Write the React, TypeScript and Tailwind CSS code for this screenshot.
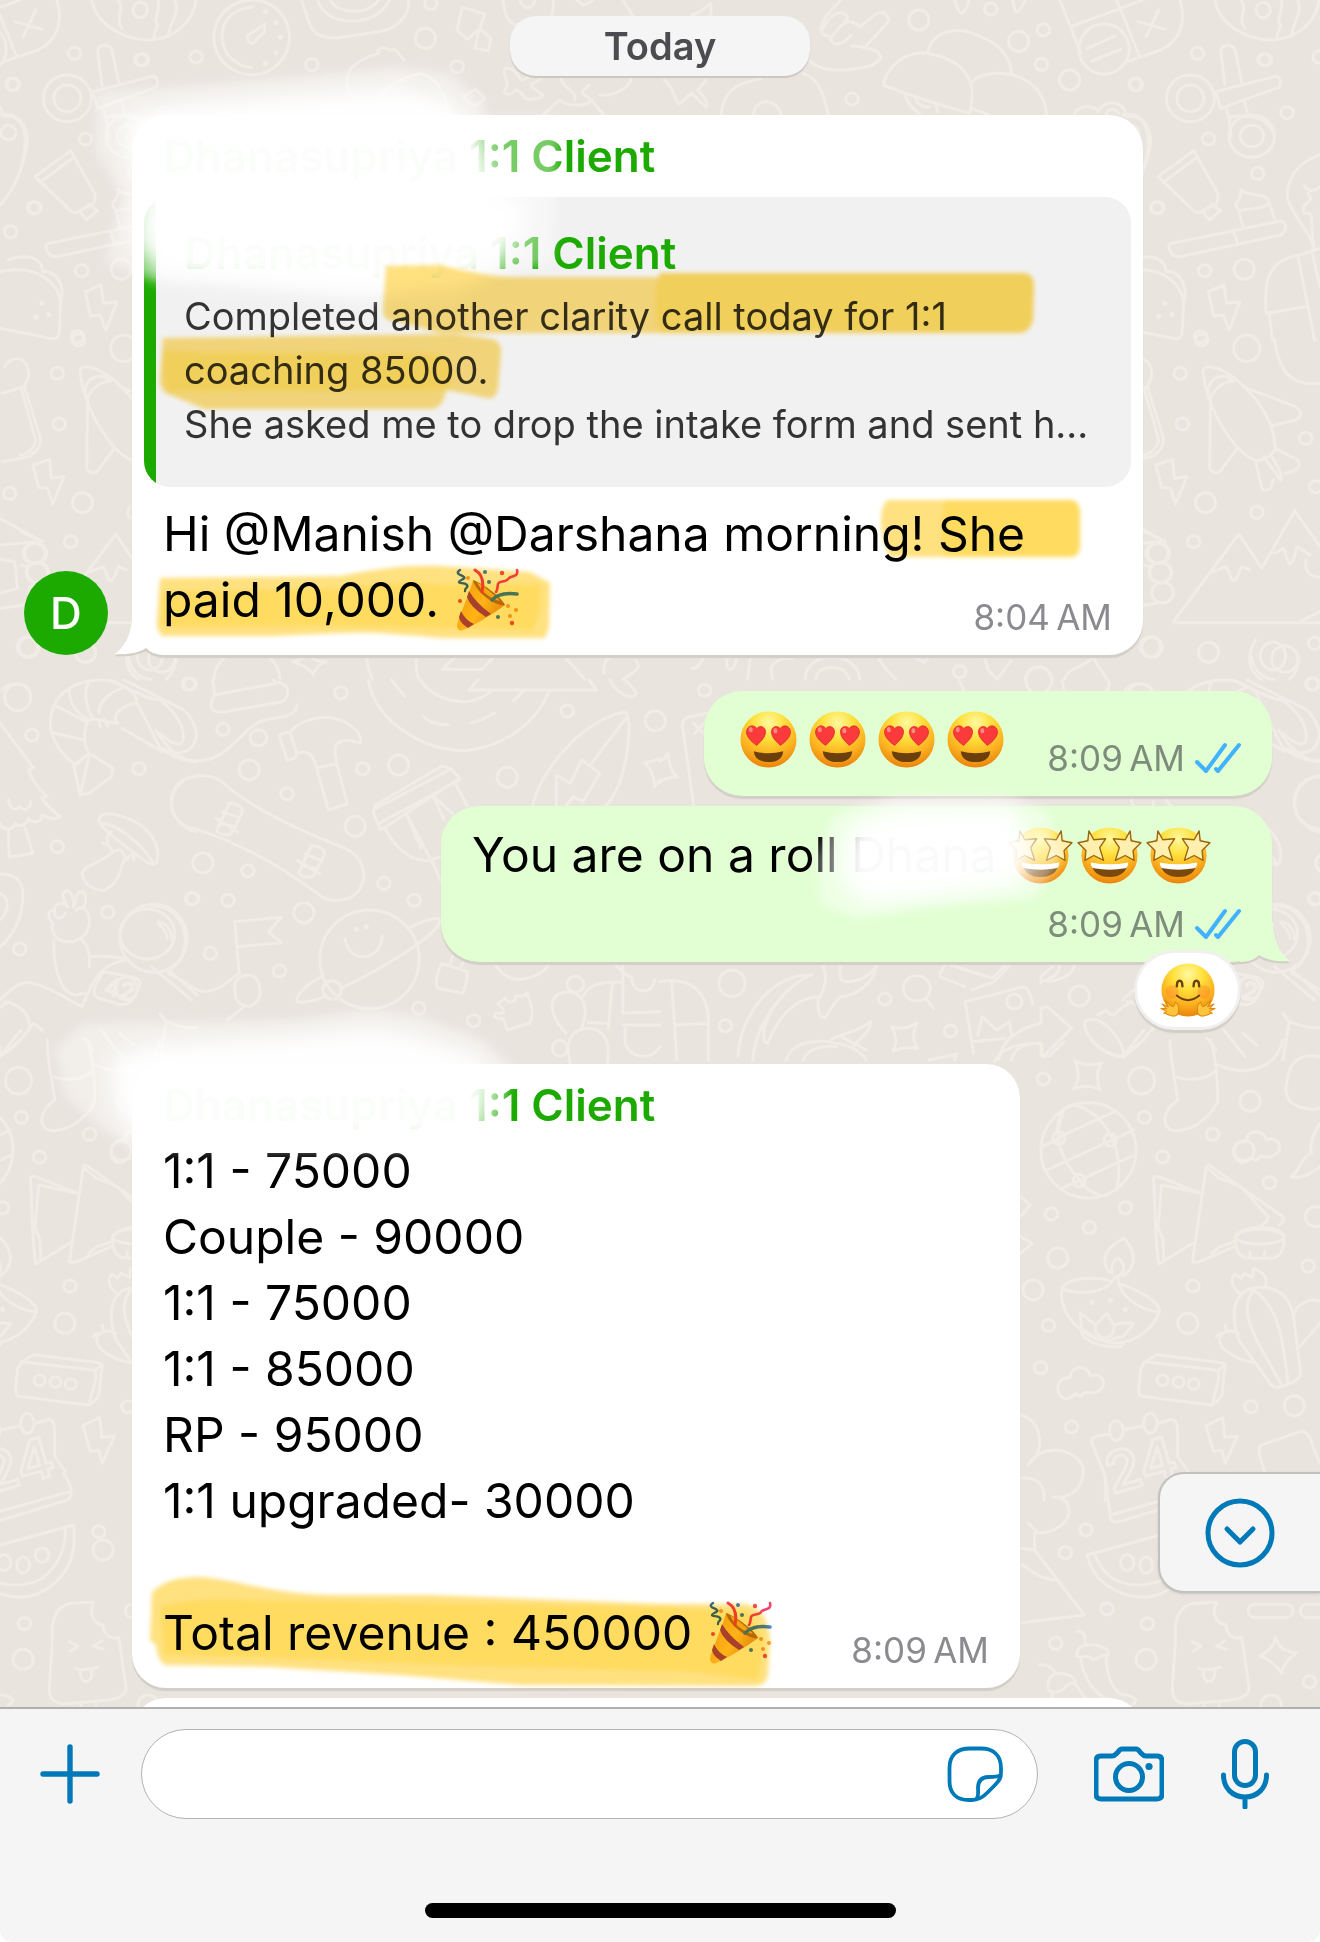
import type { ReactNode } from "react";

const INK = "#f0ece6";

type Patch = {
  at: [number, number];
  d: string;
  small: number[][];
  big?: number[][];
  huge?: number[][];
  dots?: number[][];
  rings?: number[][];
};

// every patch of the wallpaper has its own drawing grid
const patches: Patch[] = [
  {
    at: [0, 0],
    d: `M218 0C230 80 300 120 355 120C420 115 460 60 466 0M280 0C300 30 270 50 290 85M375 0C385 30 360 60 375 75C370 95 365 105 365 118M415 0C430 40 400 70 400 110
    M600 22C545 25 525 75 528 115C530 160 560 200 598 203M630 72L628 95L600 130C590 130 585 115 590 105Z
    M716 0L735 70C745 110 780 120 820 110L900 95C950 85 975 40 970 0M755 0C770 80 890 90 925 0M785 0C800 40 870 50 900 0
    M1098 22L1152 42L1140 85L1110 118L1086 90ZM1140 85L1166 115L1160 153L1128 145L1138 90
    M830 280C810 220 840 180 900 160C890 150 910 135 925 150C950 145 945 165 960 180M905 320C900 250 970 230 1000 220C1050 240 1060 300 1065 340M1100 290L1130 268L1152 295L1128 320Z
    M1200 205C1225 200 1235 240 1240 240C1260 235 1270 205 1290 215C1300 240 1250 250 1265 262L1290 285C1285 300 1265 295 1262 298C1245 305 1245 275 1225 270C1210 290 1195 285 1200 270C1215 240 1190 225 1200 205
    M1290 345L1330 300C1345 320 1400 320 1405 300L1435 345M1335 230C1325 260 1375 270 1365 300M1400 295C1395 280 1365 290 1400 255M1425 285C1460 290 1500 260 1500 230
    M1195 0C1200 60 1215 75 1230 75M1315 0C1315 40 1310 60 1300 80M1235 0C1240 30 1270 30 1270 0M1370 0L1385 15L1400 8L1408 0M1480 0L1505 50
    M0 345C50 330 75 400 62 450C50 530 20 590 0 615`,
    small: [[1024, 10], [1086, 200], [741, 194], [466, 171], [338, 179], [32, 253], [83, 623], [25, 695]],
    big: [[1011, 115]],
    dots: [[631, 34], [656, 68], [666, 112], [656, 158], [631, 190]],
    rings: [[333, 30, 17, 23], [598, 112, 90, 112], [20, 398, 18, 22]],
  },
  {
    at: [660, 0],
    d: `M950 0L1000 160M980 78L1148 0M1085 0L1138 165M1110 185L1190 150C1240 120 1250 60 1235 0M1135 65L1200 88M1185 30L1155 110M1015 145L1082 108M1025 183L1095 148
    M1320 275L1465 228C1478 235 1475 255 1470 262L1332 325ZM1342 255L1332 150C1340 130 1362 135 1366 150L1382 245M1345 325L1352 355L1357 410M1350 352C1380 345 1440 340 1458 400M1388 302L1397 345
    M1268 452L1325 580C1328 605 1320 620 1310 618L1282 638C1270 640 1262 625 1258 620L1183 530ZM1195 548L1272 475M1310 612L1332 632L1305 660L1290 635
    M1210 745C1205 730 1215 730 1225 728L1475 663C1490 665 1490 690 1475 705L1235 770C1220 770 1212 760 1210 745M1363 695L1372 730M1385 682L1375 630C1355 600 1385 610 1380 568C1395 595 1440 570 1448 610C1435 630 1390 625 1375 632M1448 612L1462 662
    M1100 815C1200 790 1245 860 1244 920L1240 1005C1235 1020 1225 1018 1200 1010L1100 985M1120 780C1180 755 1200 785 1202 815C1230 810 1255 850 1245 905
    M1303 875L1340 855L1346 910L1378 905L1352 990L1338 945L1315 948Z
    M1568 465C1510 490 1490 540 1490 590C1500 650 1550 700 1555 750M1530 555C1545 590 1568 560 1568 560M1555 750C1540 640 1560 640 1530 640C1520 600 1560 610 1540 580
    M1440 940C1435 850 1440 780 1520 765L1568 745M1440 940L1535 920M1515 765L1555 1020M1447 940L1455 1020M1548 750L1568 860
    M430 0C400 40 385 55 382 90C385 115 405 105 405 110C405 140 430 140 455 105M385 90C400 50 430 20 445 50C450 60 410 100 405 115M440 70C450 60 465 70 475 80L515 40C540 30 550 60 535 75L485 145M455 138C490 140 525 150 525 175L505 195C450 215 380 220 355 180
    M635 160C650 80 720 80 760 110C810 130 835 180 835 220M530 255C545 180 600 145 655 165C730 190 755 250 735 340C650 310 580 280 530 255M738 250C760 215 830 205 880 250C910 280 918 320 918 345M580 280C590 320 610 335 618 345M605 290C610 320 640 325 640 320M655 310L660 335M740 325L782 345
    M145 345C150 290 165 260 210 245L240 235M340 220C380 235 390 290 400 345M222 345C225 290 280 295 288 345
    M985 340C1000 310 1040 320 1040 335C1060 290 1110 310 1105 345M1060 340C1065 325 1085 325 1090 340M1110 350C1160 340 1170 420 1150 500
    M700 0C710 50 720 55 735 0M838 0C845 40 845 55 868 0M10 240C40 270 30 300 45 312C55 310 60 290 75 280L110 322C115 310 105 290 90 270L110 240M75 45C100 40 110 15 120 10C125 40 120 60 105 75`,
    small: [[786, 27], [911, 90], [906, 193], [1129, 253], [456, 297], [1277, 160], [1435, 179], [1490, 338], [1303, 417], [1180, 623], [1420, 520], [1294, 812], [1284, 1010]],
    big: [[615, 60], [852, 124], [973, 240], [1388, 808]],
    dots: [[1200, 910], [1185, 950], [1216, 943]],
    rings: [[1055, 147, 60, 75], [1260, 295, 57, 70], [1260, 295, 32, 40], [1406, 408, 54, 64], [1406, 408, 28, 33]],
  },
  {
    at: [0, 340],
    d: `M0 535L100 605M0 615L85 605M0 658L35 665L42 745L0 760M0 805L60 795
    M508 1018C515 900 660 900 665 1018M695 965C720 960 730 950 735 935C740 960 750 965 775 965C750 975 745 1000 745 1005C735 985 720 975 695 965M872 950C870 980 880 1000 885 1018M990 948C985 980 990 1000 995 1018M1085 948L1050 988L1145 988L1175 948M1340 948L1390 1018M1435 1000C1430 960 1450 950 1460 948M1510 960C1530 985 1500 1000 1480 1018M305 948C310 1000 340 1018 360 1018M418 948C420 980 410 1000 395 1018`,
    small: [[23, 460], [187, 0]],
    big: [[69, 922]],
    rings: [[85, 640, 26, 31], [90, 698, 26, 31], [356, 948, 30, 42]],
  },
  {
    at: [660, 340],
    d: `M1290 95C1290 70 1330 75 1380 130C1440 200 1460 270 1462 325C1455 345 1435 365 1415 362C1370 340 1300 220 1290 95M1308 175C1320 130 1360 120 1362 125C1355 105 1310 95 1302 150C1303 165 1306 175 1308 175M1385 140L1510 200C1530 220 1520 235 1510 240L1452 258M1308 180L1306 385C1310 400 1325 400 1330 395L1372 325M1415 365L1430 445C1435 455 1445 450 1450 445L1458 418M1435 350L1475 422M1450 345C1470 380 1480 410 1475 422M1462 325L1515 360C1525 380 1515 392 1485 400
    M1178 375L1218 358L1222 415L1252 410L1225 492L1213 445L1192 442Z
    M1220 845L1375 582L1430 685L1508 512L1568 620M1220 848L1568 848M1315 695L1345 680C1355 700 1355 720 1362 722C1375 720 1375 690 1382 680L1400 690M1460 640L1482 625C1490 650 1490 670 1497 672C1510 660 1508 630 1515 620L1545 645M1535 660C1530 690 1540 710 1568 712M1520 845L1568 815
    M1415 900C1390 950 1400 1000 1430 1018M1110 80C1130 40 1170 50 1168 110L1158 140L1195 290C1200 330 1175 350 1150 355L1105 365M1105 160L1158 140M1150 145L1185 300C1180 330 1160 345 1148 345M1150 575L1200 605M1150 675L1165 680M1148 795L1180 790M1460 0C1470 80 1490 140 1568 130
    M160 948C150 1010 185 990 180 950M215 948L208 1018M75 985C90 990 100 960 105 948M345 1018C345 930 470 930 475 1018M370 1018C375 970 440 970 450 1018M515 948L535 985L560 1018M600 948L628 968L640 948M770 948L780 990L800 1018L835 962M868 1018C870 970 925 970 930 1018M960 1018C970 980 1000 990 1030 950C1040 990 1060 1000 1060 1018M268 1018C255 970 275 955 315 955`,
    small: [[1236, 100], [1241, 252], [1534, 295], [1418, 517], [1268, 605], [1555, 910], [712, 995], [1558, 440]],
    big: [[1296, 488], [1303, 937], [1165, 920]],
    huge: [[1394, 25], [1484, 957]],
    rings: [[1181, 640, 26, 31], [1188, 698, 26, 31], [1194, 758, 26, 31]],
  },
  {
    at: [0, 680],
    d: `M120 130C120 50 170 0 240 0C290 0 325 40 325 68C280 80 265 110 280 130C255 130 240 110 212 120C195 150 200 200 212 220L180 255C140 220 120 170 120 130M130 75L205 125M165 30C165 80 190 110 215 120M210 5C195 50 210 90 220 115M300 20C250 40 235 70 235 100M130 160L200 180M212 220L175 255L190 345L212 340L265 290L268 265L212 220M190 345L212 225M235 120L238 140M250 118L255 138
    M325 68L385 215L290 145M295 0L430 85C460 110 470 160 465 175C460 210 440 220 415 218L385 205C420 250 490 250 520 225C570 190 590 120 650 115C690 110 705 95 706 75
    M505 0L510 45L655 10L650 0M510 45C500 60 500 80 505 90C515 100 525 95 535 95L670 65C685 55 685 30 680 20C670 5 655 5 655 10
    M690 155C700 140 730 110 780 112C830 120 860 160 857 187C840 190 830 170 800 190C790 210 800 240 800 250L825 372L780 390L752 265C745 220 730 210 705 220L700 235L682 240L663 165L688 155L705 220M752 265L800 250
    M875 0C890 120 1000 210 1100 212C1200 205 1280 120 1305 30M930 0L962 50M1000 0C1020 50 1110 100 1170 30M1005 108C1020 130 1040 135 1065 135M1120 128C1150 120 1160 108 1175 100M1245 32L1220 62M1135 0L1115 30L1418 30L1400 0M1450 0C1460 30 1480 50 1505 50C1520 40 1505 25 1485 0
    M1265 378C1290 250 1400 110 1485 97C1505 100 1495 300 1440 378M1490 110L1405 250M1322 378L1322 285L1355 310L1382 240L1425 280L1385 365L1362 350L1345 378
    M890 410C885 390 890 370 900 370L1050 258L1070 265L1092 295L905 450ZM893 385L1070 268M900 430L1092 300M915 445C940 510 980 545 1020 542L1048 530M1082 310L1110 378M965 400L1022 535M965 400L1000 505M1030 350L1055 420M1030 350L1075 400M1025 540L1048 605
    M408 380C405 320 440 280 490 288C520 290 530 310 560 340C650 420 750 470 820 505C865 530 870 590 860 610C850 660 800 670 770 655C700 590 600 500 460 445C430 440 410 410 408 380M545 370C565 370 580 385 575 400L550 460C535 470 515 460 515 450ZM530 395L570 415M522 430L560 440M512 415L565 455M740 497C760 497 775 512 770 527L745 587C730 597 710 587 710 577ZM725 522L765 542M717 557L755 567M707 542L760 582
    M235 420C235 400 260 395 290 410C350 430 385 490 372 548C365 560 350 550 330 530C290 490 240 450 235 420M245 430C290 440 340 500 362 545M265 455C240 470 270 495 245 490C265 495 270 520 265 520C290 500 290 510 300 540C310 520 320 520 318 540M265 520C250 540 195 560 195 580C200 620 230 635 250 630C290 600 285 560 298 530
    M0 130C30 180 60 230 80 265L68 268C75 300 95 330 112 350L98 352C110 380 130 395 143 410C135 420 115 415 100 405C100 430 75 430 68 415C65 440 40 440 35 430C30 455 5 450 0 430M20 455L22 532L78 520L60 445M20 360C25 395 45 390 45 380C60 400 75 380 72 365
    M0 583C50 580 60 620 52 680C45 740 20 780 0 800M0 640C20 650 25 690 0 720
    M125 730C110 710 115 690 130 690C130 665 155 665 160 680L148 645C155 620 175 630 175 680L185 640C195 625 210 640 200 680M180 690C200 670 215 700 212 730C210 770 180 790 155 785C130 780 120 750 125 730M130 690C125 720 150 720 155 700M128 780C125 850 140 940 180 945L200 940M195 780C210 800 215 830 212 860
    M375 730C395 750 398 770 397 775M215 830C250 825 280 835 295 835M195 980C220 900 240 850 300 840M400 880C440 900 460 935 490 935C530 930 550 890 570 880M245 875L310 890C335 895 335 910 330 925L315 960C305 975 290 975 280 972L235 955C222 950 222 935 226 920Z
    M0 960C30 920 50 905 70 908C120 920 160 960 195 980M0 1130C40 1100 60 1060 80 1030L100 1050M10 965C50 970 75 1010 70 1050
    M558 725L668 712L638 755L668 788L565 800M558 725L568 880M558 925C550 890 600 870 610 900C625 930 620 970 590 980C565 975 558 960 558 925M580 980L540 1020
    M970 745C1010 720 1040 710 1046 720C1040 770 900 870 810 925M765 890C730 910 700 950 706 965C720 970 760 960 775 945M820 775C825 850 905 850 908 768
    M1050 850L1110 875C1112 885 1105 930 1100 940L1040 925C1032 915 1040 870 1050 850M1070 850L1075 830M1095 860L1103 845M1175 848C1190 890 1220 900 1240 898C1270 895 1300 870 1305 848
    M1178 1000C1170 1010 1178 1020 1195 1015L1205 1050L1258 1030C1270 1000 1265 985 1252 938C1240 960 1230 940 1225 950C1225 970 1205 970 1200 955L1183 970C1190 985 1200 985 1195 1000Z
    M1345 1060C1300 1000 1300 940 1350 935C1390 940 1400 990 1380 1050M1385 950C1400 910 1430 905 1480 905M1355 1150C1340 1080 1360 1045 1400 1045C1440 1050 1450 1090 1443 1150M1398 1028L1440 1030M1455 910L1445 1045M1480 850L1480 1000L1568 995M1480 1035L1568 1035M1485 1045L1485 1090C1500 1140 1550 1140 1568 1100M1460 850C1480 880 1490 890 1500 890C1500 940 1550 950 1555 900
    M1568 235C1550 245 1540 245 1532 248C1550 270 1555 300 1555 320L1568 300`,
    small: [[76, 165], [452, 12], [530, 148], [810, 38], [330, 266], [862, 266], [682, 341], [1348, 93], [136, 500], [589, 572], [458, 655], [542, 661], [912, 610], [984, 661], [256, 697], [47, 807], [500, 820], [664, 873], [995, 985], [1125, 1022]],
    big: [[592, 270], [947, 255], [844, 439], [1205, 292], [1557, 122], [482, 549], [722, 698], [288, 1412]],
    huge: [[42, 52]],
    dots: [[847, 748], [870, 741]],
    rings: [[614, 173, 20, 24], [365, 775, 80, 102], [350, 762, 65, 75], [878, 838, 118, 148], [789, 930, 22, 28], [1367, 913, 20, 24], [1330, 1105, 18, 24]],
  },
  {
    at: [660, 680],
    d: `M80 378L55 150C50 120 60 110 80 108L110 100M80 130L105 160M105 130L82 160M0 245C15 235 18 220 20 220C20 250 30 280 42 292C20 290 5 300 0 307
    M710 0C715 10 720 20 720 30M955 0L960 30M1065 0C1070 15 1065 30 1060 30M1105 30C1120 5 1160 5 1170 30
    M1360 0C1400 20 1450 60 1480 60C1510 90 1540 130 1535 180C1530 200 1510 195 1480 160M1470 150C1490 200 1540 250 1568 245M1568 290C1500 290 1480 400 1550 450L1568 455
    M1460 680C1500 670 1540 720 1540 780C1540 830 1520 860 1500 870L1568 945M1475 725C1500 730 1510 760 1508 780M1460 860L1555 960
    M385 850C395 880 400 900 378 955M430 850C425 890 425 900 440 905C490 905 510 870 515 850C515 890 480 945 430 950C400 980 400 1010 390 1015C375 1010 375 980 375 950M360 885C270 880 190 1000 185 1130M372 950C300 960 270 1050 255 1090C240 1085 240 1020 290 950M360 885C320 900 230 1000 220 1140
    M632 955L650 985M725 965L865 920C875 925 880 940 885 970M725 965L745 1120M665 880L680 850M665 890L725 920M740 930L795 905L835 850M690 855L790 895L825 850M755 1065L765 1010L800 1050L830 1025L835 1065
    M805 1140C810 1070 870 1040 905 1030L905 985L920 980L978 1045L910 1130L905 1090C860 1090 840 1110 835 1140M550 1040C570 1050 590 1045 610 1028C600 1060 600 1080 612 1105C590 1100 570 1105 553 1113C565 1090 560 1060 550 1040
    M1010 1025C1050 990 1110 1100 1100 1128C1070 1140 1000 1070 1010 1025M1040 1005L1060 990C1070 1010 1080 1010 1090 990L1120 965M1100 1128L1150 1050
    M905 910C900 870 930 880 935 850M905 905C935 895 950 880 950 850M920 905C960 900 985 880 985 850
    M0 905C60 890 115 920 115 1030L115 1140M28 905L40 1140M38 1035L115 1030
    M300 1140C310 1090 360 1080 400 1085C420 1060 470 1060 500 1025C505 1050 470 1080 460 1100M430 1070L490 1110M395 1085C430 1090 470 1100 490 1140M340 1140C350 1110 380 1095 420 1100M640 1140L705 1122L700 1140
    M1480 1000L1495 1025L1480 1140M1490 1020C1520 1040 1545 1045 1568 1043M1300 1075L1322 1110M1340 1050L1390 1130`,
    small: [[106, 31], [534, 957], [155, 1037], [690, 1053], [1555, 657], [1548, 12]],
    big: [[996, 948]],
    huge: [[171, 910], [900, 0]],
    rings: [[610, 925, 32, 38], [842, 965, 18, 22], [1400, 925, 26, 34]],
  },
  {
    at: [660, 1040],
    d: `M1212 0C1212 60 1225 130 1230 180C1190 215 1190 270 1225 272C1280 275 1325 200 1325 180C1325 100 1320 50 1308 0M1222 108C1250 125 1300 120 1320 92M1325 75C1400 115 1465 80 1480 0M1385 -20L1418 15M745 5L820 -5M795 65C810 20 860 10 905 10L905 45L925 48L960 5M1025 0C1050 40 1090 50 1100 48L1150 0
    M980 195C930 210 930 330 1000 425C1020 460 1050 470 1060 468M980 195C1030 200 1110 290 1085 450M950 290L1080 215M908 320L950 295M945 275L960 205M920 390L1125 270M955 445L1128 345
    M985 62C1010 78 1030 78 1050 68C1035 95 1038 125 1045 150C1025 135 1005 135 982 147C1000 120 995 90 985 62
    M1375 365C1355 350 1360 300 1392 305C1395 265 1435 265 1440 300C1475 285 1485 340 1450 350C1440 355 1430 345 1425 350C1420 365 1410 360 1405 352C1395 370 1380 370 1375 365
    M957 1073C937 1058 942 1008 974 1013C977 973 1017 973 1022 1008C1057 993 1067 1048 1032 1058C1022 1063 1012 1053 1007 1058C1002 1073 992 1068 987 1060C977 1078 962 1078 957 1073
    M1185 672C1175 600 1175 420 1172 415C1175 405 1185 410 1190 412L1285 460L1192 435L1183 560L1195 600L1197 665M1185 672L1265 610M1265 665L1298 380C1302 372 1310 380 1315 385L1480 530C1485 540 1478 550 1470 555M1265 665C1275 672 1290 660 1300 655L1365 620M1300 385L1330 415L1380 440L1445 530C1445 545 1430 555 1425 560M1310 640L1330 620L1365 605
    M1367 595C1367 640 1380 655 1400 655L1450 655C1475 655 1482 630 1483 590C1480 570 1450 562 1425 562C1390 562 1370 580 1367 595M1402 635L1402 652M1436 635L1436 652
    M955 745C970 710 1040 710 1068 722M955 745C990 765 1060 765 1082 710M1088 712C1090 770 1140 810 1185 815M1090 730C1140 750 1190 790 1187 815C1170 870 1130 900 1105 905C1070 920 1020 890 1000 870C960 830 950 780 955 745M1068 698C1045 660 1060 620 1102 595C1130 630 1135 680 1100 708M1075 698C1065 675 1085 655 1090 655C1110 680 1100 705 1088 708M998 818L1002 868L1035 892C1070 910 1070 895 1100 890L1125 852C1105 845 1090 850 1078 855L1062 820L1035 855ZM1035 855C1030 880 1045 890 1055 895C1075 890 1080 870 1078 855M1000 870C1000 895 1040 925 1095 920L1105 905
    M1455 1040L1375 900C1350 800 1370 740 1430 742C1490 745 1505 800 1508 860L1522 1000C1522 1020 1490 1035 1470 1042C1460 1042 1455 1040 1455 1040M1410 750C1380 800 1400 860 1430 930L1475 1030M1412 752C1470 800 1480 900 1492 1025M1383 765C1350 740 1360 710 1365 702L1380 715L1388 700L1408 712L1410 685C1440 700 1445 720 1437 742M1375 880C1340 860 1320 890 1335 920C1355 950 1390 965 1415 968M1505 830C1510 790 1550 770 1568 785M1520 920L1568 850M1330 880L1322 890M1345 868L1343 855
    M1150 970C1155 965 1180 940 1185 945L1335 968C1345 970 1345 985 1340 995L1335 1065C1330 1080 1315 1095 1310 1095L1150 1070C1138 1068 1136 1060 1137 1050L1142 985ZM1150 965L1320 990C1330 995 1328 1010 1325 1030L1312 1093M1325 995L1340 975
    M1025 1205C1025 1190 1035 1188 1070 1182M1102 1170L1145 1158M1185 1150L1215 1138C1232 1140 1230 1160 1230 1250L1255 1295M1025 1205L1058 1310L1058 1380
    M1297 1157L1337 1133L1342 1193L1372 1188L1343 1270L1335 1230L1315 1235ZM1438 1297C1420 1240 1420 1220 1430 1215L1520 1175C1535 1170 1545 1190 1550 1215L1568 1270
    M858 1125C900 1140 910 1200 895 1245L875 1275C900 1215 980 1215 1005 1280C1010 1340 980 1375 935 1372M858 1315C900 1310 915 1340 912 1380M856 470L880 495L856 530M856 590L885 610L856 640
    M1568 250C1550 290 1540 320 1548 340C1520 350 1520 400 1500 410C1520 420 1550 400 1568 380M1568 50C1490 30 1490 120 1487 150C1490 210 1550 210 1568 205`,
    small: [[911, 117], [1151, 232], [1313, 283], [1194, 351], [1448, 428], [930, 522], [1106, 503], [1020, 562], [1266, 738], [923, 856], [904, 983], [978, 1161], [1404, 1100], [1540, 678]],
    big: [[1402, 184], [945, 654], [886, 750], [1254, 850], [1507, 1097], [1557, 530]],
    huge: [[1144, 122]],
    dots: [[1027, 787], [1070, 781], [1106, 809]],
    rings: [[1018, 331, 113, 143], [948, 294, 14, 19], [1070, 300, 14, 19], [996, 422, 14, 19], [1425, 590, 58, 22], [1194, 1021, 13, 16], [1232, 1026, 13, 16], [1268, 1032, 13, 16], [1084, 1172, 16, 30], [1165, 1150, 16, 30]],
  },
  {
    at: [660, 1450],
    d: `M940 140C990 150 985 240 900 250L875 220M890 300L1008 495L858 518M858 345C880 350 880 380 940 390M858 295L890 300L890 250
    M1058 80L1070 205C1075 220 1090 217 1100 212L1260 150C1275 140 1270 100 1250 70M1070 195L1265 125
    M1015 315L1275 225C1290 380 1200 440 1150 442C1090 440 1030 400 1015 315M1035 318C1060 400 1120 420 1185 395C1230 370 1258 300 1255 235
    M1225 560C1220 500 1240 465 1270 460L1322 457C1310 490 1320 520 1345 525C1345 550 1360 570 1382 562L1400 715C1400 740 1370 750 1340 752L1250 762C1220 755 1215 740 1218 700ZM1265 575L1285 588L1267 605M1342 573L1322 588L1345 598M1280 655C1290 660 1310 660 1332 652M1290 660L1293 685C1300 700 1320 700 1318 660M1292 755L1292 772M1328 755L1328 772
    M1415 463L1485 463C1510 463 1510 503 1485 503L1415 503C1392 503 1392 463 1415 463M1568 463L1540 463C1515 463 1515 503 1540 503L1568 503
    M1462 562C1470 590 1480 605 1512 608C1490 630 1478 650 1477 670C1460 640 1445 625 1425 618C1450 600 1460 585 1462 562
    M990 545C1010 535 1010 570 1012 585C1045 580 1070 600 1065 615C1040 610 1035 640 1025 625C1015 610 1000 630 990 617C990 600 995 590 1012 585M1000 625C1005 680 1030 740 1090 765M1060 620C1060 680 1080 740 1110 735C1135 745 1135 755 1120 765M900 645C925 640 935 660 940 670C980 670 990 690 985 700C965 695 965 715 955 720C945 730 925 730 922 715C920 695 925 680 940 670M930 730L940 772M985 700C1000 730 1020 760 1040 772`,
    small: [[1012, 240], [963, 308], [1062, 477], [1158, 521], [940, 580], [1543, 695], [1335, 245]],
    big: [[1155, 628], [1452, 765], [1345, 300]],
    rings: [[1110, 338, 16, 24], [1155, 345, 15, 24], [1200, 315, 16, 22]],
  },
];

const Wallpaper = () => (
  <svg className="absolute inset-0 h-full w-full" aria-hidden="true">
    <defs>
      <g id="doodles" fill="none" stroke={INK} strokeWidth="3" strokeLinecap="round" strokeLinejoin="round">
        {patches.map((p, i) => (
          <g key={i} transform={`translate(${p.at[0]} ${p.at[1]}) scale(0.4209 0.3333)`}>
            <path d={p.d} vectorEffect="non-scaling-stroke" />
            {p.small.map(([x, y], k) => (
              <ellipse key={`s${k}`} cx={x} cy={y} rx="15" ry="18" vectorEffect="non-scaling-stroke" />
            ))}
            {p.big?.map(([x, y], k) => (
              <ellipse key={`b${k}`} cx={x} cy={y} rx="24" ry="30" vectorEffect="non-scaling-stroke" />
            ))}
            {p.huge?.map(([x, y], k) => (
              <ellipse key={`h${k}`} cx={x} cy={y} rx="31" ry="40" vectorEffect="non-scaling-stroke" />
            ))}
            {p.dots?.map(([x, y], k) => (
              <ellipse key={`d${k}`} cx={x} cy={y} rx="6" ry="8" fill={INK} stroke="none" />
            ))}
            {p.rings?.map(([x, y, rx, ry], k) => (
              <ellipse key={`r${k}`} cx={x} cy={y} rx={rx} ry={ry} vectorEffect="non-scaling-stroke" />
            ))}
          </g>
        ))}
        <text x="103" y="994" fontSize="24" strokeWidth="2" fill={INK} transform="rotate(14 103 994)">42</text>
        <text x="1112" y="1494" fontSize="56" fontWeight="600" transform="rotate(-16 1112 1494)">24</text>
      </g>
    </defs>
    <use href="#doodles" x="-1123" />
    <use href="#doodles" />
    <use href="#doodles" x="1123" />
  </svg>
);

const FaceFill = ({ id }: { id: string }) => (
  <>
    <defs>
      <radialGradient id={id} cx="50%" cy="20%" r="82%">
        <stop offset="0" stopColor="#fff9a0" />
        <stop offset="0.35" stopColor="#ffe03c" />
        <stop offset="0.7" stopColor="#fbb01f" />
        <stop offset="1" stopColor="#e9800a" />
      </radialGradient>
    </defs>
    <circle cx="29" cy="29" r="28.5" fill={`url(#${id})`} />
  </>
);

const HeartEyes = () => (
  <svg viewBox="0 0 58 58" className="size-[57px]" role="img" aria-label="Heart eyes">
    <FaceFill id="face-heart" />
    <path d="M14 41q15 4 30 0q-1 11-15 11t-15-11z" fill="#6b3f0c" />
    <g fill="#fb3b3b" stroke="#d81f2a" strokeWidth="0.7">
      <path d="M17 35C11 31 5 25 7 19c2-5 8-5 10-1c3-4 9-2 9 3c0 6-5 10-9 14z" />
      <path d="M41 35c6-4 12-10 10-16c-2-5-8-5-10-1c-3-4-9-2-9 3c0 6 5 10 9 14z" />
    </g>
    <g fill="#ff8a80">
      <ellipse cx="11" cy="19" rx="2" ry="2.6" />
      <ellipse cx="36" cy="20" rx="2" ry="2.6" />
    </g>
  </svg>
);

const StarStruck = () => (
  <svg viewBox="0 0 58 58" className="size-[57px] overflow-visible" role="img" aria-label="Star-struck">
    <FaceFill id="face-star" />
    <path d="M10 37q19 4 38 0q-3 14-19 14T10 37z" fill="#7a4a0c" />
    <path d="M10 36q19 4 38 0q0 5-3 6q-16 3-32 0q-3-1-3-6z" fill="#fff" />
    <g fill="#fff0b0" stroke="#9a640c" strokeWidth="1.4" strokeLinejoin="round">
      <path d="M8 4l5 9 12-1-6 9 4 13-10-5-9 5 1-10-8-8 10-2z" />
      <path d="M50 4l-5 9-12-1 6 9-4 13 10-5 9 5-1-10 8-8-10-2z" />
    </g>
  </svg>
);

const Hugging = () => (
  <svg viewBox="0 0 58 58" className="h-[54px] w-[56px]" role="img" aria-label="Hugging face">
    <FaceFill id="face-hug" />
    <circle cx="12" cy="31" r="7" fill="#ff7a2b" opacity="0.35" />
    <circle cx="46" cy="31" r="7" fill="#ff7a2b" opacity="0.35" />
    <g fill="none" stroke="#6b3f0c" strokeLinecap="round">
      <path d="M17 25q0-6 3-6t3 6M35 25q0-6 3-6t3 6" strokeWidth="2.6" />
      <path d="M17 35q12 10 24 0" strokeWidth="2.2" />
    </g>
    <g fill="#fdc63a" stroke="#e08a10" strokeWidth="1.2" strokeLinejoin="round">
      <path d="M14 57C9 57 6 54 3 54l3-2-6-3 6 0-5-5 7 3-4-7 7 6c3 2 4-1 4-4q4 2 4 7c0 5-2 8-5 8z" />
      <path d="M44 57c5 0 8-3 11-3l-3-2 6-3-6 0 5-5-7 3 4-7-7 6c-3 2-4-1-4-4q-4 2-4 7c0 5 2 8 5 8z" />
    </g>
  </svg>
);

const PartyPopper = () => (
  <svg viewBox="0 0 64 64" className="size-16" role="img" aria-label="Party popper">
    <defs>
      <linearGradient id="cone" x1="0" y1="0.2" x2="1" y2="0.8">
        <stop offset="0" stopColor="#f0b31c" />
        <stop offset="0.5" stopColor="#ffd23c" />
        <stop offset="1" stopColor="#df8f13" />
      </linearGradient>
    </defs>
    <path d="M18 12C14 28 3 50 2 58q1 6 6 4C18 58 38 46 50 37C44 32 28 18 18 12z" fill="url(#cone)" />
    <path d="M18 12c7 2 28 16 32 25c-10 2-30-14-32-25z" fill="#b9781b" />
    <path d="M22 14c5 3 17 12 23 19c-9-2-19-9-23-19z" fill="#f3c22a" />
    <path d="M14 23q7 12 22 23l-5 3Q15 39 12 29zM6 43q4 9 13 13l-6 4Q5 55 4 49z" fill="#a94a73" />
    <g fill="none" strokeLinecap="round">
      <path d="M5 2c-6 4 2 5 4 7s-5 3-5 5 6 0 8 3-3 3-2 6" stroke="#3c6fae" strokeWidth="2.4" />
      <path d="M20 2c7 4 9 12 7 22" stroke="#f0455a" strokeWidth="3" />
      <path d="M62 2c2 8-7 5-9 9s-9 1-10 5 0 5-2 8" stroke="#f0456a" strokeWidth="2.6" />
      <path d="M37 32c7-7 16-7 25-6" stroke="#4a86dd" strokeWidth="3.4" />
    </g>
    <g fill="#ef5350">
      <circle cx="5" cy="33" r="2" /><circle cx="47" cy="5" r="2.2" /><circle cx="57" cy="55" r="2.2" />
    </g>
    <g fill="#4a86dd">
      <circle cx="30" cy="4" r="2" /><circle cx="34" cy="14" r="2" /><circle cx="43" cy="49" r="2" />
    </g>
    <g fill="#f6a53a">
      <circle cx="13" cy="10" r="2" /><circle cx="53" cy="38" r="2" /><circle cx="61" cy="42" r="2" /><circle cx="55" cy="48" r="2" />
    </g>
  </svg>
);

const Ticks = () => (
  <svg viewBox="0 0 46 32" className="h-8 w-[46px]" fill="none" stroke="#41b2ff" strokeWidth="4" strokeLinecap="round" strokeLinejoin="round" role="img" aria-label="Read">
    <path d="M2 20l9 9L30 3M21 27l2 2L44 3" />
  </svg>
);

const Time = ({ children, read }: { children: string; read?: boolean }) => (
  <span className={`flex items-center gap-2.5 whitespace-nowrap text-[35px] leading-10 ${read ? "text-[#7d8c7b]" : "text-[#8a8a8f]"}`}>
    <time>{children}</time>
    {read && <Ticks />}
  </span>
);

const Name = () => <>Dhanasupriya 1:1 Client</>;

const Tail = ({ out }: { out?: boolean }) => (
  <svg
    viewBox="0 0 50 42"
    aria-hidden="true"
    className={`absolute bottom-[-2px] h-[42px] w-[50px] ${out ? "right-[-18px] -scale-x-100 text-[#e1ffd2]" : "left-[-17px] text-white"}`}
  >
    <path d="M17 2C17 18 12 32 0 41C12 42 24 40 31 36C36 40 42 42 50 42V2Z" fill="#d3cec7" />
    <path d="M17 0C17 16 12 30 0 39C12 40 24 38 31 33C36 38 42 40 50 40V0Z" fill="currentColor" />
  </svg>
);

const Line = ({ children }: { children?: ReactNode }) => (
  <p className="flex h-[66px] items-center gap-4 whitespace-pre text-[48px] leading-[66px] text-black">{children}</p>
);

// pen strokes laid over the messages
const Marks = () => (
  <svg className="pointer-events-none absolute inset-0 h-full w-full mix-blend-multiply" aria-hidden="true">
    <defs>
      <filter id="soft">
        <feGaussianBlur stdDeviation="2" />
      </filter>
    </defs>
    <g filter="url(#soft)">
      <g fill="#ffe180">
        <path d="M386 266L440 265C470 272 490 276 510 277L662 277V333H440L400 322C384 322 383 315 383 310Z" />
        <path d="M163 338L455 334L492 339Q502 342 501 352L498 390Q494 400 488 398L446 390Q444 408 430 409H205L165 393Q158 385 160 375Z" />
        <path d="M888 500H960V557H890Q881 540 881 520Q881 505 888 500Z" />
        <path d="M160 578L340 576C380 568 410 565 440 566L530 572L550 583L549 628L545 638H440C400 634 370 632 345 633L270 636H162Q156 630 157 620Z" />
        <path d="M152 1592C165 1580 180 1577 200 1577C240 1580 270 1594 330 1595H430L660 1604H745Q768 1608 770 1640L768 1675Q766 1686 755 1686L520 1685L400 1675L270 1667L165 1665Q157 1660 156 1645L150 1640Z" />
      </g>
      <g fill="#ffdb60">
        <path d="M660 273H1025Q1034 275 1034 285L1033 320Q1030 332 1020 333H660Q650 305 660 273Z" />
        <path d="M165 350L200 352L440 354Q462 372 446 390L168 392Q160 370 165 350Z" />
        <path d="M945 500H1072Q1080 502 1080 512V545Q1080 557 1070 557H945Q938 530 945 500Z" />
        <path d="M162 592L340 588C380 582 410 583 440 584L540 584Q544 610 532 630L440 628L345 626H162Z" />
        <path d="M160 1608Q180 1597 250 1600L430 1603L660 1607L750 1612L764 1640L758 1680L690 1672L440 1665L270 1658L165 1655Z" />
      </g>
    </g>
  </svg>
);

const Smears = () => (
  <svg className="pointer-events-none absolute inset-0 h-full w-full" aria-hidden="true">
    <defs>
      <filter id="haze" x="-20%" y="-20%" width="140%" height="140%">
        <feGaussianBlur stdDeviation="10" />
      </filter>
      <filter id="edge" x="-20%" y="-20%" width="140%" height="140%">
        <feGaussianBlur stdDeviation="5" />
      </filter>
    </defs>
    <g fill="#fff" fillOpacity="0.4" filter="url(#edge)">
      <path d="M98 92L180 87L330 74L400 67L450 74L482 100L486 118H560L552 262L466 284L360 296L240 284L152 280L106 262L122 196L96 150Z" />
      <path d="M834 814L896 797L1010 797L1050 812L1060 862L1036 898L910 908L858 920L820 905L816 860Z" />
      <path d="M56 1050L84 1024L295 1020L370 1010L418 1016L478 1038L514 1066L500 1120L460 1148H300L130 1146L104 1130L66 1095Z" />
    </g>
    <g fill="#fff" fillOpacity="0.97" filter="url(#haze)">
      <path d="M126 116L180 104L330 92L400 86L446 98L476 124L486 150L496 190L528 205L520 235L500 262L460 288L360 294L240 284L160 276L132 240L138 190L126 150Z" />
      <path d="M850 824L896 808L1006 806L1024 822L1030 862L1020 886L910 900L866 904L842 885L842 852Z" />
      <path d="M110 1062L140 1046L295 1036L370 1028L410 1034L478 1056L492 1076L488 1110L470 1144H300L140 1142L116 1110Z" />
    </g>
  </svg>
);

const listed = ["1:1 - 75000", "Couple - 90000", "1:1 - 75000", "1:1 - 85000", "RP - 95000", "1:1 upgraded- 30000", ""];

const App = () => {
  return (
    <div className="flex h-screen flex-col overflow-hidden bg-white font-['Inter',sans-serif]">
      <main className="relative min-h-0 flex-1 overflow-hidden bg-[#e9e4de] pt-4">
        <Wallpaper />

        <div className="relative">
          <div className="mx-auto flex h-[60px] w-[300px] items-center justify-center rounded-[26px] bg-[#f5f5f5] text-[38px] font-semibold text-[#4b4b50] shadow-[0_2px_1px_#cbc7c0]">
            Today
          </div>

          <div className="mt-[39px] flex items-end gap-6 pl-6">
            <div className="flex size-[84px] shrink-0 items-center justify-center rounded-full bg-[#1caa00] text-[44px] font-medium text-white">
              D
            </div>
            <article className="relative w-full max-w-[1011px] rounded-[34px] bg-white px-3 pt-2 pb-[22px] shadow-[0_3px_1px_#d3cec7]">
              <Tail />
              <h2 className="relative px-[19px] pb-2 text-[44px] leading-[66px] font-semibold text-[#1caa00]"><Name /></h2>
              <blockquote className="relative flex overflow-hidden rounded-[26px] bg-[#f1f1f1]">
                <div className="w-3 shrink-0 bg-[#1caa00]"></div>
                <div className="px-7 pt-6 pb-9">
                  <h3 className="mb-1 text-[44px] leading-[64px] font-semibold text-[#1caa00]"><Name /></h3>
                  <p className="text-[38px] leading-[54px] whitespace-nowrap text-[#333]">
                    Completed another clarity call today for 1:1
                    <br />
                    coaching 85000.
                    <br />
                    She asked me to drop the intake form and sent h...
                  </p>
                </div>
              </blockquote>
              <div className="relative px-[19px] pt-3.5">
                <Line>Hi @Manish @Darshana morning! She</Line>
                <div className="flex items-end justify-between">
                  <Line>paid 10,000.<PartyPopper /></Line>
                  <div className="-mb-1"><Time>{"8:04\u202fAM"}</Time></div>
                </div>
              </div>
            </article>
          </div>

          <article className="mt-9 mr-12 ml-auto flex h-[105px] w-fit items-end gap-[43px] rounded-[38px] bg-[#e1ffd2] pr-[31px] pb-7 pl-9 shadow-[0_3px_1px_#d3cec7]">
            <div className="flex gap-3">
              <HeartEyes />
              <HeartEyes />
              <HeartEyes />
              <HeartEyes />
            </div>
            <div className="-mb-2.5"><Time read>{"8:09\u202fAM"}</Time></div>
          </article>

          <article className="relative mt-2.5 mr-12 ml-auto w-[831px] max-w-full rounded-[38px] bg-[#e1ffd2] px-[31px] pt-4 pb-[18px] shadow-[0_3px_1px_#d3cec7]">
            <Tail out />
            <div className="flex items-center justify-between pr-[34px]">
              <Line>You are on a roll Dhana</Line>
              <div className="flex gap-3">
                <StarStruck />
                <StarStruck />
                <StarStruck />
              </div>
            </div>
            <div className="mt-4 flex justify-end"><Time read>{"8:09\u202fAM"}</Time></div>
            <button className="absolute right-[31px] bottom-[-68px] flex h-20 w-[107px] items-center justify-center rounded-full border-3 border-[#f1f0ef] bg-white shadow-[0_3px_1px_#d3cec7]">
              <Hugging />
            </button>
          </article>

          <article className="mt-[102px] ml-[132px] w-[888px] max-w-full rounded-[34px] bg-white px-[31px] pt-2 pb-[22px] shadow-[0_3px_1px_#d3cec7]">
            <h2 className="text-[44px] leading-[66px] font-semibold text-[#1caa00]"><Name /></h2>
            {listed.map((text, i) => (
              <Line key={i}>{text}</Line>
            ))}
            <div className="flex items-end justify-between">
              <Line>Total revenue : 450000<PartyPopper /></Line>
              <div className="-mb-1"><Time>{"8:09\u202fAM"}</Time></div>
            </div>
          </article>

          <article className="mt-2.5 ml-[132px] h-20 max-w-[1011px] rounded-[34px] bg-white"></article>
        </div>

        <Smears />
        <Marks />

        <button
          aria-label="Scroll to latest"
          className="absolute right-0 bottom-[114px] flex h-[121px] w-[162px] items-center rounded-l-[26px] border-2 border-r-0 border-[#c3c1be] bg-[#f5f5f5] pl-[45px] shadow-sm"
        >
          <svg viewBox="0 0 70 70" className="size-[70px]" fill="none" stroke="#0079b8" strokeWidth="5" strokeLinecap="round" strokeLinejoin="round">
            <circle cx="35" cy="35" r="32" />
            <path d="M22 31l13 13 13-13" />
          </svg>
        </button>
      </main>

      <footer className="h-[235px] shrink-0 rounded-b-xl border-t-2 border-[#b0b0b0] bg-[#f5f5f5] pt-5">
        <div className="flex items-center pr-[51px] pl-10 text-[#0079b8]">
          <button aria-label="Attach">
            <svg viewBox="0 0 60 60" className="size-[60px]" fill="none" stroke="currentColor" strokeWidth="5.4" strokeLinecap="round">
              <path d="M30 3v54M3 30h54" />
            </svg>
          </button>
          <div className="ml-[41px] flex h-[90px] flex-1 items-center rounded-full border border-[#b2b2b2] bg-white pr-[34px] pl-9">
            <input aria-label="Message" className="min-w-0 flex-1 text-[44px] text-black outline-none" />
            <button aria-label="Stickers">
              <svg viewBox="0 0 56 56" className="size-14" fill="none" stroke="currentColor" strokeWidth="3.8" strokeLinejoin="round">
                <path d="M23 2.5h11C47 2.5 54 10 54 22v5c0 6-3 9-6 12l-8 8c-5 5-9 7-15 7h-3C9 54 2.5 47 2.5 35V22C2.5 9 10 2.5 23 2.5z" />
                <path d="M29 53c3-2 2-7 2-11c0-8 4-11 11-11c5 0 9 0 11-2" />
              </svg>
            </button>
          </div>
          <button aria-label="Camera" className="ml-14">
            <svg viewBox="0 0 70 56" className="h-14 w-[70px]" fill="none" stroke="currentColor" strokeWidth="5" strokeLinejoin="round">
              <path d="M7 10h11c3 0 4-2 6-4q2-3 4-3h14q2 0 4 3c2 2 3 4 6 4h11q5 0 5 5v33q0 5-5 5H7q-5 0-5-5V15q0-5 5-5z" />
              <circle cx="35" cy="31" r="13.5" />
              <circle cx="55" cy="20.5" r="3.6" fill="currentColor" stroke="none" />
            </svg>
          </button>
          <button aria-label="Voice message" className="ml-[57px]">
            <svg viewBox="0 0 48 70" className="h-[70px] w-12" fill="none" stroke="currentColor" strokeWidth="5" strokeLinecap="round">
              <rect x="13.5" y="2.5" width="21" height="44" rx="10.5" />
              <path d="M2.5 36c0 13 9 22 21.5 22s21.5-9 21.5-22M24 58v10" />
            </svg>
          </button>
        </div>
        <div className="mx-auto mt-[84px] h-[15px] w-[471px] rounded-full bg-black"></div>
      </footer>
    </div>
  );
};

export default App;
